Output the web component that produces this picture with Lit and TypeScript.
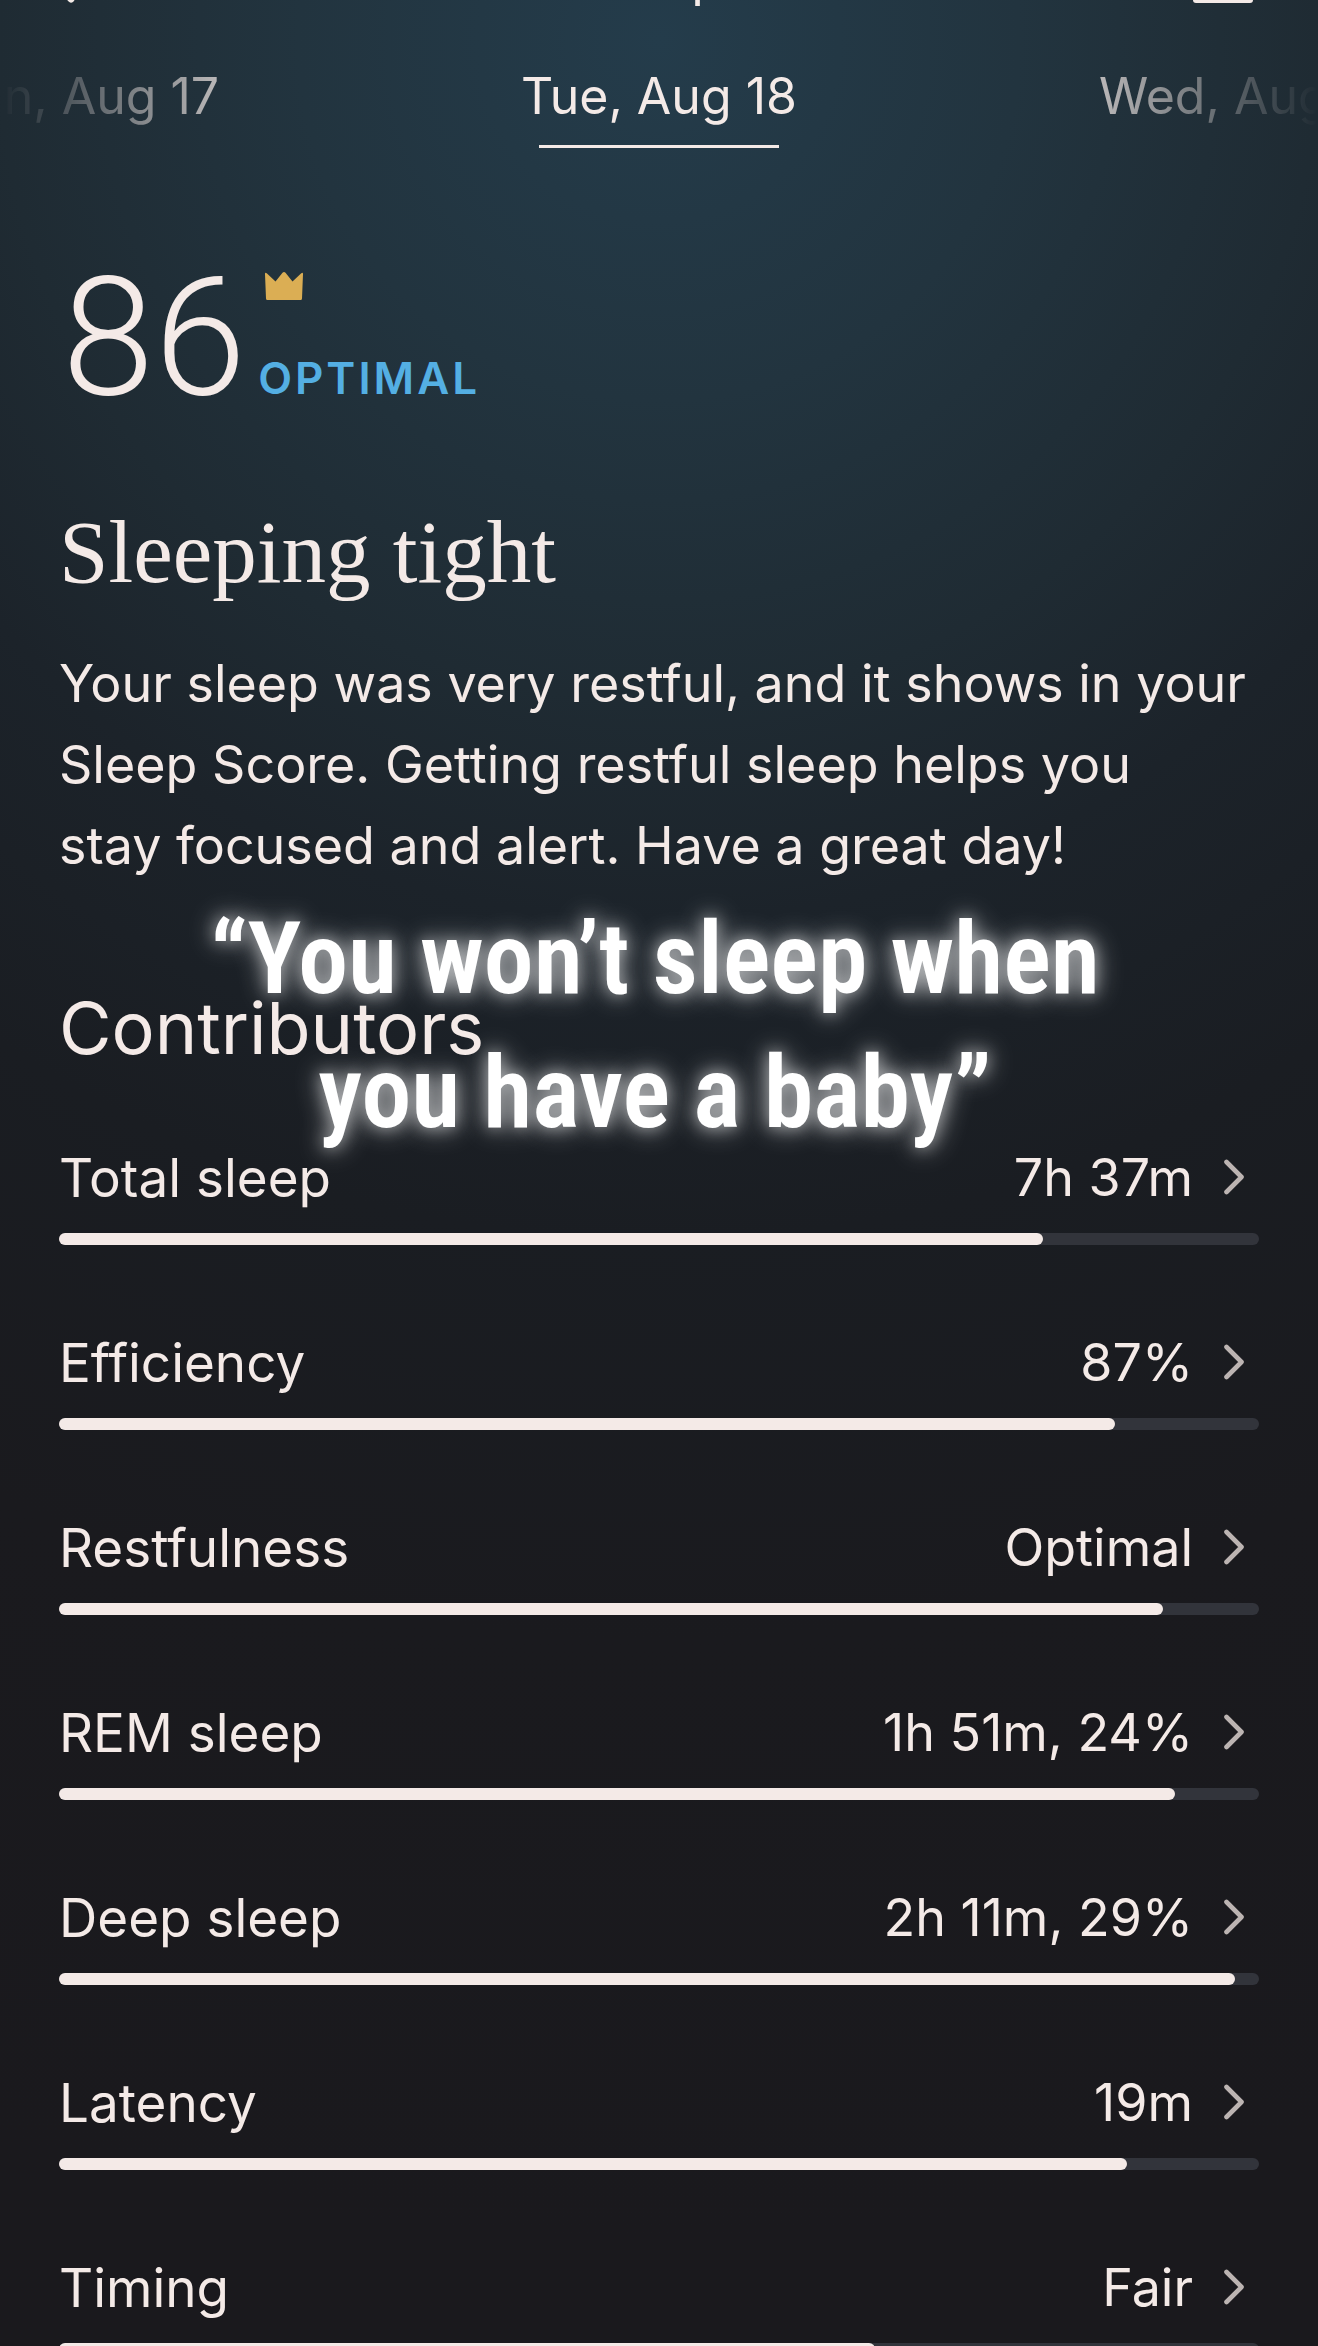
import { LitElement, html, css } from "lit";
import { customElement, property } from "lit/decorators.js";

interface Contributor {
  name: string;
  value: string;
  level: number;
}

const CONTRIBUTORS: Contributor[] = [
  { name: "Total sleep", value: "7h 37m", level: 82 },
  { name: "Efficiency", value: "87%", level: 88 },
  { name: "Restfulness", value: "Optimal", level: 92 },
  { name: "REM sleep", value: "1h 51m, 24%", level: 93 },
  { name: "Deep sleep", value: "2h 11m, 29%", level: 98 },
  { name: "Latency", value: "19m", level: 89 },
  { name: "Timing", value: "Fair", level: 68 },
];

@customElement("contributor-row")
class ContributorRow extends LitElement {
  @property({ attribute: false }) item!: Contributor;

  static styles = css`
    :host {
      display: block;
    }
    .row {
      display: block;
      width: 100%;
      margin: 0;
      padding: 0;
      border: 0;
      background: none;
      color: inherit;
      font: inherit;
      text-align: left;
      cursor: pointer;
    }
    .line {
      display: flex;
      align-items: center;
      height: 64px;
      padding-right: 14px;
    }
    .name {
      flex: 1;
      font-size: 53px;
    }
    .chevron {
      margin-left: 30px;
      display: block;
    }
    .track {
      display: block;
      height: 12px;
      margin-top: 23px;
      border-radius: 6px;
      background: #32343b;
    }
    .fill {
      display: block;
      height: 12px;
      border-radius: 6px;
      background: #f4eae7;
    }
  `;

  render() {
    const { name, value, level } = this.item;
    return html`
      <button class="row" type="button">
        <span class="line">
          <span class="name">${name}</span>
          <span>${value}</span>
          <svg class="chevron" width="22" height="38" viewBox="0 0 22 38" fill="none" aria-hidden="true">
            <path d="M3.5 3 18.5 18 3.5 33" stroke="#bcb4b2" stroke-width="4.6" stroke-linecap="round" stroke-linejoin="round" />
          </svg>
        </span>
        <span class="track"><span class="fill" style="width:${level}%"></span></span>
      </button>
    `;
  }
}

@customElement("app-root")
class AppRoot extends LitElement {
  static styles = css`
    :host {
      display: block;
      box-sizing: border-box;
      height: 100vh;
      overflow: hidden;
      color: #f4eae7;
      font-family: Inter, "Liberation Sans", sans-serif;
      font-size: 52px;
      line-height: 64px;
      background: radial-gradient(
          circle at 50% 40px,
          #243c4b 0,
          #22343f 360px,
          #1f2b33 660px,
          #1c232a 880px,
          #1a1d22 1200px,
          #1a1a1e 1600px,
          #1a191d 2200px
        )
        #1a191d;
    }
    button {
      margin: 0;
      padding: 0;
      border: 0;
      background: none;
      color: inherit;
      font: inherit;
      cursor: pointer;
    }
    .topbar {
      display: grid;
      grid-template-columns: 1fr auto 1fr;
      grid-template-rows: 6px;
      align-items: end;
      padding: 0 65px 0 55px;
      overflow: hidden;
    }
    .topbar .title {
      font-weight: 400;
      line-height: 56px;
    }
    .topbar .calendar {
      justify-self: end;
    }
    .topbar .back {
      justify-self: start;
    }
    .topbar svg {
      display: block;
    }
    .dates {
      display: grid;
      grid-template-columns: minmax(0, 1fr) auto minmax(0, 1fr);
      column-gap: 302px;
      padding-top: 58px;
      font-size: 50px;
      white-space: nowrap;
      overflow: hidden;
      -webkit-mask-image: linear-gradient(90deg, transparent 0, #000 300px, #000 calc(100% - 300px), transparent 100%);
      mask-image: linear-gradient(90deg, transparent 0, #000 300px, #000 calc(100% - 300px), transparent 100%);
    }
    .prev,
    .next {
      align-self: start;
    }
    .prev {
      justify-self: end;
    }
    .next {
      justify-self: start;
    }
    .today {
      display: flex;
      flex-direction: column;
      align-items: center;
      gap: 17px;
    }
    .today::after {
      content: "";
      width: 240px;
      height: 3px;
      background: #f4eae7;
    }
    main {
      padding: 0 59px;
    }
    .score {
      display: flex;
      margin-top: 118px;
      height: 140px;
      padding-left: 3px;
      gap: 12px;
    }
    .number {
      font-family: Roboto, sans-serif;
      font-size: 166px;
      font-weight: 300;
      line-height: 144px;
    }
    .rank {
      display: flex;
      flex-direction: column;
      justify-content: space-between;
      padding: 6px 0 0;
    }
    .rank svg {
      display: block;
      margin-left: 6px;
    }
    .label {
      color: #54afe3;
      font-size: 44px;
      font-weight: 600;
      line-height: 56px;
      letter-spacing: 3px;
    }
    h1 {
      margin: 90px 0 0;
      font-family: "Liberation Serif", serif;
      font-size: 89px;
      font-weight: 400;
      line-height: 112px;
    }
    p {
      margin: 35px 0 0;
      padding-right: 12px;
      line-height: 81px;
    }
    .contributors {
      position: relative;
    }
    h2 {
      margin: 100px 0 0;
      font-size: 72px;
      font-weight: 400;
      line-height: 84px;
    }
    .caption {
      position: absolute;
      top: -94px;
      left: 0;
      right: 8px;
      color: #fff;
      font-family: "Roboto Condensed", Roboto, sans-serif;
      font-size: 100px;
      font-weight: 600;
      line-height: 134px;
      text-align: center;
      text-shadow: 0 0 16px rgba(255, 255, 255, 0.5), 0 0 28px rgba(255, 255, 255, 0.6);
    }
    .list {
      display: flex;
      flex-direction: column;
      gap: 86px;
      margin-top: 76px;
    }
  `;

  render() {
    return html`
      <header class="topbar">
        <button class="back" type="button" aria-label="Back">
          <svg width="24" height="40" viewBox="0 0 24 40" fill="none" aria-hidden="true">
            <path d="M16 2 3 18 16 33" stroke="#f4eae7" stroke-width="7" stroke-linecap="round" stroke-linejoin="round" />
          </svg>
        </button>
        <span class="title">Sleep</span>
        <button class="calendar" type="button" aria-label="Calendar">
          <svg width="60" height="40" viewBox="0 0 60 40" aria-hidden="true">
            <rect width="60" height="37" rx="3" fill="#f4eae7" />
          </svg>
        </button>
      </header>
      <nav class="dates">
        <button class="prev" type="button">Mon, Aug 17</button>
        <button class="today" type="button" aria-current="date">Tue, Aug 18</button>
        <button class="next" type="button">Wed, Aug 19</button>
      </nav>
      <main>
        <section class="score">
          <span class="number">86</span>
          <div class="rank">
            <svg width="40" height="30" viewBox="0 0 40 30" aria-hidden="true">
              <path d="M1 2Q1 0 3 1.500L11.500 9.500 18.500 .8Q20 -.7 21.500 .8L28.500 9.500 37 1.500Q39 0 39 2L38 26.500Q38 28 36.500 28H3.500Q2 28 2 26.500Z" fill="#dbae54" />
            </svg>
            <span class="label">OPTIMAL</span>
          </div>
        </section>
        <h1>Sleeping tight</h1>
        <p>
          Your sleep was very restful, and it shows in your Sleep Score. Getting restful sleep helps you stay focused
          and alert. Have a great day!
        </p>
        <section class="contributors">
          <h2>Contributors</h2>
          <div class="list">
            ${CONTRIBUTORS.map((item) => html`<contributor-row .item=${item}></contributor-row>`)}
          </div>
          <div class="caption">“You won’t sleep when<br />you have a baby”</div>
        </section>
      </main>
    `;
  }
}
